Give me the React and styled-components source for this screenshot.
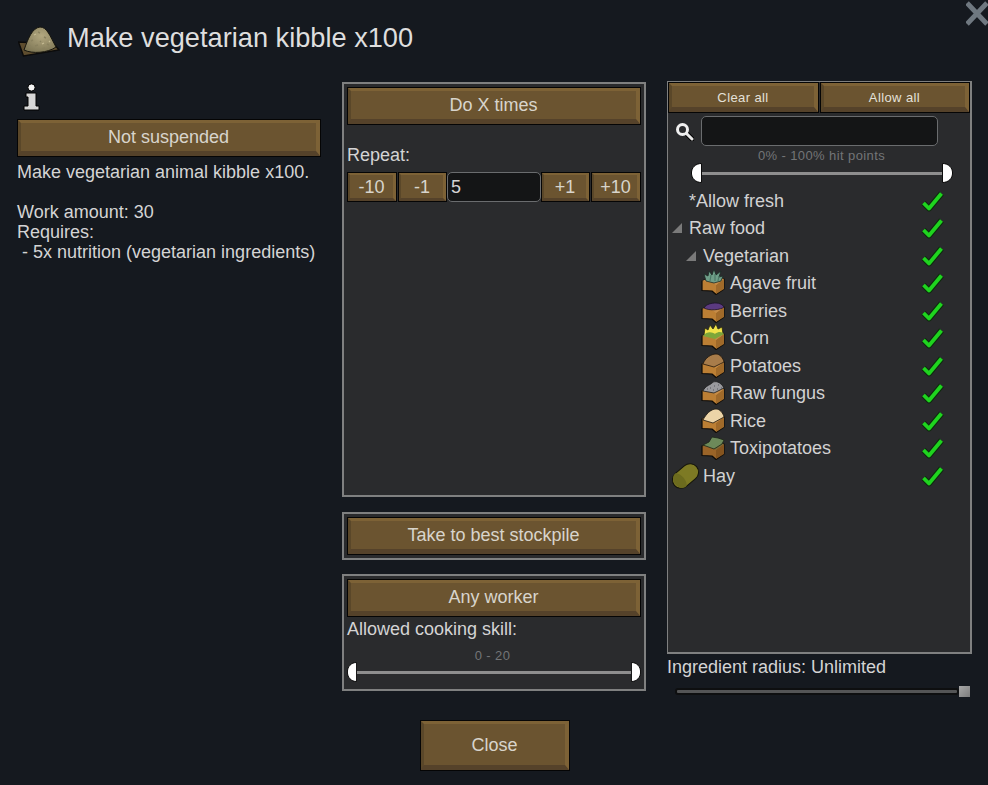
import React from "react";
import styled, { createGlobalStyle } from "styled-components";

const GlobalStyle = createGlobalStyle`
  html, body {
    margin: 0;
    padding: 0;
    background: #15191f;
  }
  * {
    box-sizing: border-box;
  }
`;

const Page = styled.div`
  position: relative;
  width: 988px;
  height: 785px;
  overflow: hidden;
  background: #15191f;
  color: #d4d4d4;
  font-family: "Liberation Sans", Arial, sans-serif;
  font-size: 18px;
`;

const CloseX = styled.svg`
  position: absolute;
  top: 1px;
  right: 0;
  width: 22px;
  height: 25px;
`;

const Header = styled.header`
  height: 81px;
  padding: 24px 0 0 18px;
  display: flex;
  align-items: flex-start;
`;

const Title = styled.h1`
  margin: 0 0 0 7px;
  font-size: 27.2px;
  font-weight: 400;
  line-height: 28px;
  color: #dedede;
`;

const Columns = styled.main`
  height: 639px;
  padding-left: 17px;
  display: flex;
  gap: 21px;
  align-items: flex-start;
`;

const LeftColumn = styled.section`
  width: 304px;
  padding-top: 2px;
`;

const InfoWrap = styled.div`
  height: 36px;
  padding-left: 6px;
`;

const Description = styled.p`
  margin: 5px 0 0;
  line-height: 20px;
  white-space: pre-wrap;
`;

const MiddleColumn = styled.section`
  width: 304px;
  padding-top: 1px;
  display: flex;
  flex-direction: column;
  gap: 15px;
`;

const Panel = styled.div`
  height: ${(p) => p.$height}px;
  margin-top: ${(p) => p.$pull || 0}px;
  border: 2px solid #7f8080;
  background: #2a2b2d;
  padding: 3px;
  display: flex;
  flex-direction: column;
`;

const Bevel = styled.button`
  display: block;
  width: ${(p) => p.$width || "100%"};
  height: ${(p) => p.$height || 38}px;
  flex: ${(p) => (p.$grow ? "1 1 0" : "0 0 auto")};
  padding: 0;
  border-style: solid;
  border-width: 4px 5px 6px 4px;
  border-color: #7d6236 #7d6236 #55422a #5a4729;
  background: #6b5430;
  outline: 1px solid #050505;
  outline-offset: -1px;
  color: #d8d4cc;
  font-family: "Liberation Sans", Arial, sans-serif;
  font-size: 18px;
  line-height: 1;
`;

const TinyBevel = styled(Bevel)`
  padding-top: 1px;
  font-size: 13px;
  font-weight: 400;
  letter-spacing: 0.4px;
  color: #e4e1da;
`;

const RepeatLabel = styled.div`
  margin-top: 20px;
  height: 27px;
  line-height: 20px;
`;

const RepeatRow = styled.div`
  display: flex;
  height: 30px;
`;

const StepButton = styled(Bevel)`
  height: 30px;
  width: ${(p) => p.$width}px;
  margin-right: ${(p) => p.$gap || 0}px;
  border-width: 3px 4px 4px 3px;
`;

const Field = styled.div`
  width: ${(p) => p.$width}px;
  height: 30px;
  border: 1px solid #6a6c6e;
  border-radius: 5px;
  background: #141516;
  padding-left: 3px;
  line-height: 28px;
  color: #d4d4d4;
`;

const SkillLabel = styled.div`
  height: 21px;
  margin-top: 2px;
  line-height: 20px;
`;

const TinyCaption = styled.div`
  margin-top: ${(p) => p.$top}px;
  padding-left: ${(p) => p.$shift || 0}px;
  padding-right: ${(p) => p.$shiftBack || 0}px;
  text-align: center;
  font-size: 13px;
  line-height: 14px;
  letter-spacing: 0.4px;
  color: #737577;
`;

const Slider = styled.div`
  display: flex;
  align-items: center;
  height: 20px;
  margin: ${(p) => p.$margin || 0};
`;

const SliderLine = styled.div`
  flex: 1;
  height: 3px;
  background: #8e8e8e;
`;

const RightColumn = styled.section`
  width: 305px;
`;

const FilterPanel = styled.div`
  height: 573px;
  border: 1px solid #7f8080;
  border-width: 1px 2px 2px 1px;
  background: #2a2b2d;
`;

const FilterButtons = styled.div`
  display: flex;
  gap: 1px;
  height: 31px;
`;

const SearchRow = styled.div`
  display: flex;
  align-items: center;
  height: 30px;
  margin-top: 3px;
  padding-left: 7px;
`;

const SearchField = styled(Field)`
  margin-left: 7px;
  width: 237px;
`;

const TreeList = styled.ul`
  list-style: none;
  margin: 4px 0 0;
  padding: 0;
`;

const TreeRow = styled.li`
  display: flex;
  align-items: center;
  height: 27.5px;
  padding-left: ${(p) => p.$indent}px;
  padding-right: 26px;
`;

const RowSlot = styled.span`
  display: flex;
  align-items: center;
  flex: 0 0 ${(p) => p.$width}px;
`;

const RowLabel = styled.span`
  flex: 1;
  line-height: 20px;
  color: #d2d2d2;
`;

const RadiusLabel = styled.div`
  margin-top: 3px;
  line-height: 20px;
`;

const RadiusSlider = styled.div`
  display: flex;
  align-items: center;
  height: 12px;
  margin: 8px 2px 0 8px;
`;

const RadiusTrack = styled.div`
  flex: 1;
  height: 7px;
  border: 2px solid #0e0f10;
  border-radius: 3px;
  background: #545556;
`;

const RadiusThumb = styled.div`
  width: 11px;
  height: 11px;
  background: linear-gradient(135deg, #a8a8a8, #7c7c7c);
`;

const Footer = styled.footer`
  display: flex;
  justify-content: center;
  padding-left: 2px;
`;

const InfoIcon = () => (
  <svg width="18" height="28" viewBox="0 0 18 28">
    <circle cx="8.5" cy="4.5" r="3.6" fill="#f4f4f4" stroke="#000" strokeWidth="1" />
    <path d="M3 10h10v13h3v4H1v-4h4v-9H3z" fill="#d6d6d6" stroke="#000" strokeWidth="1" />
  </svg>
);

const RockIcon = () => (
  <svg width="42" height="34" viewBox="0 0 42 34">
    <defs>
      <radialGradient id="rock" cx="0.55" cy="0.35" r="0.75">
        <stop offset="0" stopColor="#b3a880" />
        <stop offset="1" stopColor="#7a7352" />
      </radialGradient>
    </defs>
    <path d="M0.5 18 L5.5 32 L41 26 L36 20 Z" fill="#5e4d2e" stroke="#0b0b0b" strokeWidth="1.4" />
    <path d="M6 26 C10 15 14 4 22 3 C29 3 32 12 38 23 C30 29 14 30 6 26 Z" fill="url(#rock)" stroke="#17160f" strokeWidth="1" />
    <path d="M13 17l2-1M20 8l2 1M26 13l2 1M17 22l3-1M29 20l2 1M22 17l1 1M11 23l2-1M24 25l3-1" stroke="#8a8260" strokeWidth="1.4" />
    <path d="M16 11l2-1M24 20l2-1M31 17l1 1" stroke="#c6bc94" strokeWidth="1.2" />
  </svg>
);

const SearchIcon = () => (
  <svg width="19" height="19" viewBox="0 0 19 19">
    <path d="M11.5 11.5L17 17" stroke="#000" strokeWidth="5" strokeLinecap="round" />
    <path d="M11.5 11.5L17 17" stroke="#e8e8e8" strokeWidth="3" strokeLinecap="round" />
    <circle cx="7.5" cy="7.5" r="5" fill="none" stroke="#f0f0f0" strokeWidth="3" />
  </svg>
);

const SliderThumb = ({ flip, width }) => (
  <svg width={width} height="20" viewBox="0 0 12 20" preserveAspectRatio="none">
    <path
      d={flip ? "M0.5 0.5C7 0.5 11.5 4.5 11.5 10S7 19.5 0.5 19.5Z" : "M11.5 0.5C5 0.5 0.5 4.5 0.5 10S5 19.5 11.5 19.5Z"}
      fill="#fff"
      stroke="#000"
    />
  </svg>
);

const Triangle = () => (
  <svg width="10" height="10" viewBox="0 0 10 10">
    <path d="M10 0V10H0Z" fill="#7a7a7a" />
  </svg>
);

const CheckMark = () => (
  <svg width="23" height="22" viewBox="0 0 23 22">
    <path d="M2.5 13L8 18.5L20.5 3.5" fill="none" stroke="#0d2c0d" strokeWidth="6" strokeLinejoin="round" />
    <path d="M2.5 13L8 18.5L20.5 3.5" fill="none" stroke="#1fd41f" strokeWidth="3.8" strokeLinejoin="round" />
  </svg>
);

const crateTops = {
  agave: (
    <>
      <path d="M5 12L3 5L7 7L8 2L11 6L13 0L15 6L20 2L18 8L22 7L20 12L13 14Z" fill="#6f9e88" stroke="#1c2a25" strokeWidth="0.8" />
      <path d="M9 12L10 6M14 12V5M17 12L18 7" stroke="#4c7a68" strokeWidth="1.2" />
    </>
  ),
  berries: <path d="M3 11C5 7 11 6 15 6C19 6 22 8 23 10C20 13 8 14 3 11Z" fill="#5b3a80" stroke="#1b1226" strokeWidth="0.8" />,
  corn: (
    <>
      <path d="M3 11L4 4L7 6L9 1L12 5L15 0L17 5L21 3L22 10Z" fill="#f0e24a" stroke="#2a2810" strokeWidth="0.8" />
      <path d="M2 12C6 7 11 8 14 10C18 7 21 8 23 10L14 15Z" fill="#7da63a" />
    </>
  ),
  potato: <path d="M2 12C4 6 10 2 15 2C19 2 22 6 23 10L13 15Z" fill="#a87c4a" stroke="#1e150b" strokeWidth="0.8" />,
  fungus: (
    <>
      <path d="M2 12C4 7 9 6 11 4C14 1 20 3 23 9L13 14Z" fill="#9a9a9e" stroke="#1a1a1a" strokeWidth="0.8" />
      <path d="M9 9h1M13 7h1M17 6h1M16 10h1M12 11h1M20 9h1M6 10h1" stroke="#55555a" strokeWidth="1.2" />
    </>
  ),
  rice: <path d="M2 13C5 7 10 2 15 2C19 2 22 6 23 10L12 16Z" fill="#ecd4a8" stroke="#1e180e" strokeWidth="0.8" />,
  toxi: <path d="M2 11L8 8L11 3L17 4L23 6L21 10L13 15Z" fill="#6d8a5a" stroke="#1c2417" strokeWidth="0.8" />,
};

const FoodIcon = ({ kind }) => {
  const toxi = kind === "toxi";
  return (
    <svg width="24" height="24" viewBox="0 0 24 24" overflow="visible">
      <path
        d="M1 10V19.5L11 20L15 23.5L23 18V8L13 5Z"
        fill={toxi ? "#9a6428" : "#bc7f34"}
        stroke="#0c0a07"
        strokeWidth="1.2"
        strokeLinejoin="round"
      />
      <path d="M15 14V23L23 18V8Z" fill={toxi ? "#84541f" : "#a06a2a"} />
      <path d="M1 10L11 11L15 14L23 8L13 5Z" fill={toxi ? "#7a6a38" : "#c68c48"} />
      <g transform="translate(0 -2)">{crateTops[kind]}</g>
    </svg>
  );
};

const HayIcon = () => (
  <svg width="25" height="24" viewBox="0 0 25 24" overflow="visible">
    <g transform="rotate(-40 12.5 12)">
      <rect x="-2" y="3.5" width="29" height="17" rx="8.5" fill="#7d7a24" stroke="#14140a" strokeWidth="1" />
      <path d="M6.5 3.5C11 6 11 18 6.5 20.5C-3 20.5 -3 3.5 6.5 3.5Z" fill="#6c6b1e" />
    </g>
  </svg>
);

const rows = [
  { label: "*Allow fresh", indent: 4, slot: 17 },
  { label: "Raw food", indent: 4, slot: 17, node: <Triangle /> },
  { label: "Vegetarian", indent: 18, slot: 17, node: <Triangle /> },
  { label: "Agave fruit", indent: 33, slot: 29, node: <FoodIcon kind="agave" /> },
  { label: "Berries", indent: 33, slot: 29, node: <FoodIcon kind="berries" /> },
  { label: "Corn", indent: 33, slot: 29, node: <FoodIcon kind="corn" /> },
  { label: "Potatoes", indent: 33, slot: 29, node: <FoodIcon kind="potato" /> },
  { label: "Raw fungus", indent: 33, slot: 29, node: <FoodIcon kind="fungus" /> },
  { label: "Rice", indent: 33, slot: 29, node: <FoodIcon kind="rice" /> },
  { label: "Toxipotatoes", indent: 33, slot: 29, node: <FoodIcon kind="toxi" /> },
  { label: "Hay", indent: 5, slot: 30, node: <HayIcon /> },
];

const App = () => {
  return (
    <Page>
      <GlobalStyle />
      <CloseX viewBox="0 0 22 25">
        <path d="M1 2L21 23M21 2L1 23" stroke="#6f7880" strokeWidth="5" />
      </CloseX>

      <Header>
        <RockIcon />
        <Title>Make vegetarian kibble x100</Title>
      </Header>

      <Columns>
        <LeftColumn>
          <InfoWrap>
            <InfoIcon />
          </InfoWrap>
          <Bevel>Not suspended</Bevel>
          <Description>
            {"Make vegetarian animal kibble x100.\n\nWork amount: 30\nRequires:\n - 5x nutrition (vegetarian ingredients)"}
          </Description>
        </LeftColumn>

        <MiddleColumn>
          <Panel $height={415}>
            <Bevel>Do X times</Bevel>
            <RepeatLabel>Repeat:</RepeatLabel>
            <RepeatRow>
              <StepButton $width={50} $gap={1}>-10</StepButton>
              <StepButton $width={49}>-1</StepButton>
              <Field $width={94}>5</Field>
              <StepButton $width={49} $gap={1}>+1</StepButton>
              <StepButton $width={50}>+10</StepButton>
            </RepeatRow>
          </Panel>
          <Panel $height={48}>
            <Bevel>Take to best stockpile</Bevel>
          </Panel>
          <Panel $height={117} $pull={-1}>
            <Bevel>Any worker</Bevel>
            <SkillLabel>Allowed cooking skill:</SkillLabel>
            <TinyCaption $top={9} $shiftBack={3}>0 - 20</TinyCaption>
            <Slider $margin="-1px 0 0 0">
              <SliderThumb width={10} />
              <SliderLine />
              <SliderThumb width={10} flip />
            </Slider>
          </Panel>
        </MiddleColumn>

        <RightColumn>
          <FilterPanel>
            <FilterButtons>
              <TinyBevel $width="151px" $height={31}>Clear all</TinyBevel>
              <TinyBevel $grow $height={31}>Allow all</TinyBevel>
            </FilterButtons>
            <SearchRow>
              <SearchIcon />
              <SearchField />
            </SearchRow>
            <TinyCaption $top={3} $shift={5}>0% - 100% hit points</TinyCaption>
            <Slider $margin="0 17px 0 23px">
              <SliderThumb width={11} />
              <SliderLine />
              <SliderThumb width={11} flip />
            </Slider>
            <TreeList>
              {rows.map((row) => (
                <TreeRow key={row.label} $indent={row.indent}>
                  <RowSlot $width={row.slot}>{row.node}</RowSlot>
                  <RowLabel>{row.label}</RowLabel>
                  <CheckMark />
                </TreeRow>
              ))}
            </TreeList>
          </FilterPanel>
          <RadiusLabel>Ingredient radius: Unlimited</RadiusLabel>
          <RadiusSlider>
            <RadiusTrack />
            <RadiusThumb />
          </RadiusSlider>
        </RightColumn>
      </Columns>

      <Footer>
        <Bevel $width="150px" $height={51}>Close</Bevel>
      </Footer>
    </Page>
  );
};

export default App;
